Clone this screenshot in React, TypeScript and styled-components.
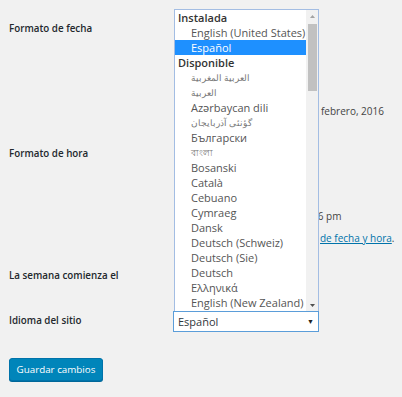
import styled, { createGlobalStyle } from "styled-components";

const GlobalStyle = createGlobalStyle`
  html, body {
    margin: 0;
    padding: 0;
    background: #f1f1f1;
  }
  body {
    font-family: "Open Sans", "Liberation Sans", sans-serif;
    color: #444;
  }
`;

const Page = styled.div`
  width: 402px;
  height: 397px;
  padding: 10px 0 0 9px;
  box-sizing: border-box;
  overflow: hidden;
`;

const FormRow = styled.div<{ $h: number }>`
  display: flex;
  height: ${(p) => p.$h}px;
`;

const Label = styled.div<{ $top: number }>`
  width: 164px;
  flex: none;
  padding-top: ${(p) => p.$top}px;
  font-size: 9.8px;
  line-height: 14px;
  font-weight: 600;
  color: #23282d;
`;

const Field = styled.div`
  flex: 1;
  display: flex;
  flex-direction: column;
  position: relative;
`;

const Note = styled.div<{ $top: number; $left: number }>`
  margin-top: ${(p) => p.$top}px;
  padding-left: ${(p) => p.$left}px;
  font-size: 10px;
  line-height: 14px;
  color: #444;
  white-space: nowrap;
`;

const Link = styled.a`
  color: #0073aa;
  text-decoration: underline;
`;

const SelectWrap = styled.div`
  position: relative;
  margin-top: 11px;
  width: 146px;
`;

const SelectBox = styled.div`
  height: 21px;
  box-sizing: border-box;
  border: 1px solid #5b9dd9;
  background: #fff;
  display: flex;
  align-items: center;
  justify-content: space-between;
  padding: 0 4px 0 4px;
  font-size: 11px;
  color: #32373c;
`;

const Caret = styled.span`
  font-size: 7px;
  color: #222;
`;

const Dropdown = styled.div`
  position: absolute;
  left: 1px;
  bottom: 100%;
  width: 145px;
  height: 302px;
  box-sizing: border-box;
  border: 1px solid #a3bde3;
  border-bottom: none;
  background: #fff;
  display: flex;
  overflow: hidden;
`;

const List = styled.div`
  flex: 1;
  display: flex;
  flex-direction: column;
  overflow: hidden;
`;

const Group = styled.div`
  height: 15px;
  line-height: 15px;
  padding-left: 3px;
  font-size: 11px;
  font-weight: 600;
  color: #333;
  white-space: nowrap;
`;

const Option = styled.div<{ $selected?: boolean; $small?: boolean }>`
  height: 15px;
  line-height: 15px;
  padding-left: 16px;
  font-size: ${(p) => (p.$small ? "9px" : "11px")};
  white-space: nowrap;
  color: ${(p) => (p.$selected ? "#fff" : p.$small ? "#777" : "#555")};
  background: ${(p) => (p.$selected ? "#1e90ff" : "transparent")};
`;

const ScrollTrack = styled.div`
  width: 12px;
  flex: none;
  background: #f1f1f1;
  display: flex;
  flex-direction: column;
  align-items: center;
`;

const ScrollArrow = styled.div<{ $down?: boolean }>`
  height: 12px;
  flex: none;
  display: flex;
  align-items: center;
  justify-content: center;
  ${(p) => (p.$down ? "margin-top: auto;" : "")}
`;

const Thumb = styled.div`
  width: 9px;
  height: 67px;
  margin-top: 2px;
  background: #c1c1c1;
`;

const SubmitButton = styled.button`
  margin-top: 15px;
  width: 94px;
  height: 23px;
  padding: 0;
  border: 1px solid #0073aa;
  border-radius: 3px;
  background: #0085ba;
  box-shadow: 0 1px 0 #006799;
  color: #fff;
  font-family: "Open Sans", "Liberation Sans", sans-serif;
  font-size: 9.8px;
`;

const languages: { name: string; small?: boolean }[] = [
  { name: "العربية المغربية", small: true },
  { name: "العربية", small: true },
  { name: "Azərbaycan dili" },
  { name: "گؤنئی آذربایجان", small: true },
  { name: "Български" },
  { name: "বাংলা", small: true },
  { name: "Bosanski" },
  { name: "Català" },
  { name: "Cebuano" },
  { name: "Cymraeg" },
  { name: "Dansk" },
  { name: "Deutsch (Schweiz)" },
  { name: "Deutsch (Sie)" },
  { name: "Deutsch" },
  { name: "Ελληνικά" },
  { name: "English (New Zealand)" },
];

const Arrow = ({ down }: { down?: boolean }) => (
  <svg width="5" height="3" viewBox="0 0 5 3">
    <path d={down ? "M0 0H5L2.5 3Z" : "M0 3H5L2.5 0Z"} fill={down ? "#505050" : "#a3a3a3"} />
  </svg>
);

const App = () => {
  return (
    <>
      <GlobalStyle />
      <Page>
        <FormRow $h={125}>
          <Label $top={12}>Formato de fecha</Label>
          <Field>
            <Note $top={94} $left={148}>febrero, 2016</Note>
          </Field>
        </FormRow>
        <FormRow $h={123}>
          <Label $top={12}>Formato de hora</Label>
          <Field>
            <Note $top={74} $left={139}>46 pm</Note>
            <Note $top={8} $left={147}>
              <Link href="#">de fecha y hora</Link>.
            </Note>
          </Field>
        </FormRow>
        <FormRow $h={42}>
          <Label $top={11}>La semana comienza el</Label>
          <Field />
        </FormRow>
        <FormRow $h={43}>
          <Label $top={14}>Idioma del sitio</Label>
          <Field>
            <SelectWrap>
              <Dropdown>
                <List>
                  <Group>Instalada</Group>
                  <Option>English (United States)</Option>
                  <Option $selected>Español</Option>
                  <Group>Disponible</Group>
                  {languages.map((l) => (
                    <Option key={l.name} $small={l.small}>
                      {l.name}
                    </Option>
                  ))}
                </List>
                <ScrollTrack>
                  <ScrollArrow>
                    <Arrow />
                  </ScrollArrow>
                  <Thumb />
                  <ScrollArrow $down>
                    <Arrow down />
                  </ScrollArrow>
                </ScrollTrack>
              </Dropdown>
              <SelectBox>
                Español
                <Caret>▼</Caret>
              </SelectBox>
            </SelectWrap>
          </Field>
        </FormRow>
        <SubmitButton>Guardar cambios</SubmitButton>
      </Page>
    </>
  );
};

export default App;
